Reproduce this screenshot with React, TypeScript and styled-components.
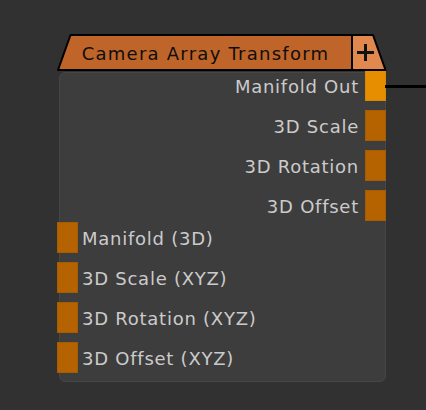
import styled, { createGlobalStyle } from 'styled-components';

const GlobalStyle = createGlobalStyle`
  html, body {
    margin: 0;
    padding: 0;
    background: #313131;
  }
  body {
    font-family: 'DejaVu Sans', Verdana, sans-serif;
  }
`;

const Canvas = styled.div`
  width: 426px;
  height: 410px;
  padding: 34px 0 0 57px;
  box-sizing: border-box;
  overflow: hidden;
`;

const Node = styled.div`
  width: 329px;
  display: flex;
  flex-direction: column;
`;

const Header = styled.div`
  position: relative;
  display: flex;
  height: 36px;
  z-index: 1;
`;

const HeaderShape = styled.svg`
  position: absolute;
  inset: 0;
  overflow: visible;
`;

const Title = styled.div`
  position: relative;
  flex: 0 0 295px;
  display: flex;
  align-items: center;
  justify-content: center;
  padding: 3px 0 0 2px;
  box-sizing: border-box;
  font-size: 18px;
  letter-spacing: 1.25px;
  color: #0e0e0e;
`;

const PlusButton = styled.div`
  position: relative;
  flex: 1;
  display: flex;
  align-items: center;
  padding: 1px 0 0 4px;
`;

const Body = styled.div`
  margin: 2px 0 0 2px;
  width: 327px;
  height: 310px;
  box-sizing: border-box;
  background: #3d3d3d;
  border: 1px solid #464646;
  border-radius: 6px;
  display: flex;
  flex-direction: column;
`;

const PortList = styled.div<{ $side: 'in' | 'out' }>`
  display: flex;
  flex-direction: column;
  gap: 9px;
  margin: ${(p) => (p.$side === 'out' ? '-3px -1px 0 0' : '1px 0 0 -3px')};
`;

const Row = styled.div<{ $side: 'in' | 'out' }>`
  display: flex;
  align-items: center;
  height: 31px;
  padding-top: 2px;
  box-sizing: border-box;
  justify-content: ${(p) => (p.$side === 'out' ? 'flex-end' : 'flex-start')};
  gap: ${(p) => (p.$side === 'out' ? '6px' : '4px')};
`;

const Label = styled.span`
  font-size: 18px;
  letter-spacing: 0.75px;
  color: #cbcbcb;
  white-space: nowrap;
`;

const Port = styled.div<{ $active?: boolean; $wired?: boolean }>`
  position: relative;
  align-self: stretch;
  margin-top: -2px;
  width: 21px;
  box-sizing: border-box;
  background: ${(p) => (p.$active ? '#e68e00' : '#b46300')};
  border: 1px solid ${(p) => (p.$active ? '#d98600' : '#a85c00')};

  &::after {
    content: '';
    display: ${(p) => (p.$wired ? 'block' : 'none')};
    position: absolute;
    left: 100%;
    top: 14px;
    width: 60px;
    height: 3px;
    background: #000;
  }
`;

const outputs = ['Manifold Out', '3D Scale', '3D Rotation', '3D Offset'];
const inputs = [
  'Manifold (3D)',
  '3D Scale (XYZ)',
  '3D Rotation (XYZ)',
  '3D Offset (XYZ)',
];

const App = () => {
  return (
    <Canvas>
      <GlobalStyle />
      <Node>
        <Header>
          <HeaderShape width="329" height="36" viewBox="0 0 329 36">
            <polygon
              points="1,36 13.5,1 295,1 295,36"
              fill="#c0652a"
              stroke="#000"
              strokeWidth="2"
              strokeLinejoin="round"
            />
            <polygon
              points="295,1 316,1 328.5,36 295,36"
              fill="#e0884e"
              stroke="#000"
              strokeWidth="2"
              strokeLinejoin="round"
            />
          </HeaderShape>
          <Title>Camera Array Transform</Title>
          <PlusButton>
            <svg width="19" height="19" viewBox="0 0 19 19">
              <path d="M9.5 1v17M1 9.5h17" stroke="#111" strokeWidth="3" />
            </svg>
          </PlusButton>
        </Header>
        <Body>
          <PortList $side="out">
            {outputs.map((name, i) => (
              <Row $side="out" key={name}>
                <Label>{name}</Label>
                <Port $active={i === 0} $wired={i === 0} />
              </Row>
            ))}
          </PortList>
          <PortList $side="in">
            {inputs.map((name) => (
              <Row $side="in" key={name}>
                <Port />
                <Label>{name}</Label>
              </Row>
            ))}
          </PortList>
        </Body>
      </Node>
    </Canvas>
  );
};

export default App;
